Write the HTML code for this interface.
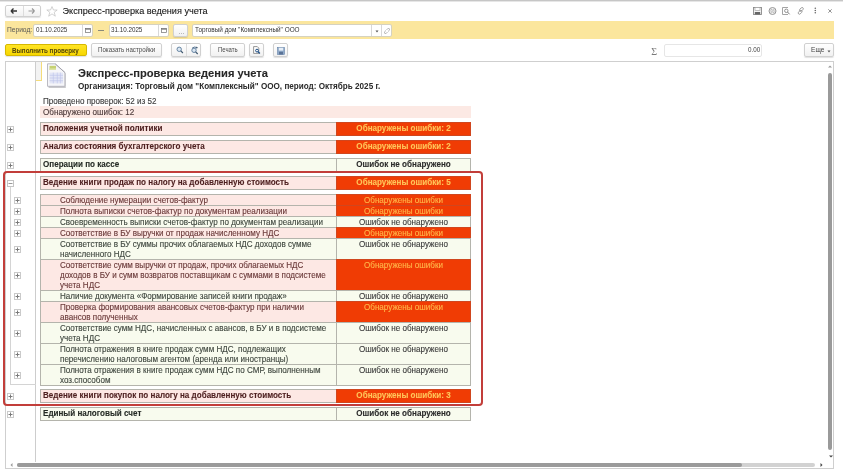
<!DOCTYPE html>
<html><head><meta charset="utf-8">
<style>
*{margin:0;padding:0;box-sizing:border-box}
html,body{width:843px;height:475px;overflow:hidden;background:#fff;-webkit-font-smoothing:antialiased;font-family:"Liberation Sans",sans-serif;position:relative}
.a{position:absolute}
.t{position:absolute;white-space:nowrap;line-height:1}
.btn{position:absolute;border:1px solid #d0d0d0;border-radius:2px;background:linear-gradient(#ffffff,#f1f1f1);box-shadow:0 1px 1px rgba(0,0,0,.12)}
.fld{position:absolute;background:#fff;border:1px solid #d6d2bf;border-radius:2px}
.vd{position:absolute;top:0;bottom:0;width:1px;background:#d8d8d8}
.pb{position:absolute;width:7px;height:7px}
.row{position:absolute;left:40px;width:431px}
.lc{position:absolute;left:0;top:0;bottom:0;width:297px;border:1px solid #b4b4ac}
.rc{position:absolute;left:296px;top:0;bottom:0;width:135px;border:1px solid #b4b4ac}
.pk{background:#fde8e4}
.gr{background:#f8fbee}
.rd{background:#f03c04;border-color:#d0461e}
.bt{font-weight:bold;font-size:8.1px}
.c{transform-origin:0 0;transform:scaleX(.783)}
.mr{position:absolute;left:40px;width:431px;height:14px}
.sr{position:absolute;left:40px;width:431px}
.mt{position:absolute;left:2px;top:0.9px;font-size:8.7px;font-weight:bold;white-space:nowrap;line-height:1;transform:scaleX(.93);transform-origin:0 0}
.ms{position:absolute;left:0;right:0;top:0.9px;text-align:center;font-size:8.7px;font-weight:bold;white-space:nowrap;line-height:1;transform:scaleX(.93)}
.ss{position:absolute;left:0;right:0;top:-0.1px;text-align:center;font-size:8.4px;white-space:nowrap;line-height:10px;transform:scaleX(.965)}
.stx{position:absolute;left:19px;top:-0.1px;font-size:8.4px;white-space:nowrap;line-height:10px;transform:scaleX(.965);transform-origin:0 0}
.stx,.ss,.tr{-webkit-text-stroke:0.12px currentColor}
.mt,.ms{-webkit-text-stroke:0.1px currentColor}
.tp{color:#4c1e1e}.tg{color:#242a24}.ty{color:#ffc65a}.tk{color:#2a2a2a}
.sp{color:#693838}.sg{color:#3c443c}.sy{color:#ffb74a}.sk{color:#3a3a3a}
</style></head><body><div style="position:absolute;left:0;top:0;width:843px;height:475px;will-change:transform">

<!-- top line -->
<div class="a" style="left:0;top:0;width:843px;height:1px;background:#c6c6c6"></div><div class="a" style="left:0;top:1px;width:843px;height:1px;background:#e6e6e6"></div>

<!-- nav buttons -->
<div class="btn" style="left:5px;top:5px;width:35.5px;height:12px"></div>
<div class="a" style="left:22.5px;top:6px;width:1px;height:10px;background:#dcdcdc"></div>
<svg class="a" style="left:10px;top:7px" width="8" height="8" viewBox="0 0 8 8"><path d="M1 4H7M1 4L3.5 1.5M1 4L3.5 6.5" stroke="#333" stroke-width="1.4" fill="none"/></svg>
<svg class="a" style="left:28px;top:7px" width="8" height="8" viewBox="0 0 8 8"><path d="M0.5 4H6.5M6.5 4L4 1.5M6.5 4L4 6.5" stroke="#9a9a9a" stroke-width="1.2" fill="none"/></svg>
<!-- star -->
<svg class="a" style="left:45.5px;top:5.5px" width="12" height="11" viewBox="0 0 12 11"><path d="M6 0.6L7.5 4H11.2L8.2 6.3L9.3 10.2L6 7.9L2.7 10.2L3.8 6.3L0.8 4H4.5Z" stroke="#c6c6c6" stroke-width="0.8" fill="none"/></svg>
<div class="t" style="left:62.5px;top:7px;font-size:9.15px;color:#151515;-webkit-text-stroke:0.1px #151515">Экспресс-проверка ведения учета</div>

<!-- top right icons -->
<svg class="a" style="left:752.5px;top:6.5px" width="9" height="8" viewBox="0 0 9 8"><rect x="0.5" y="0.5" width="8" height="7" fill="#f4f4f4" stroke="#8c8c8c" stroke-width="0.9"/><rect x="2" y="0.5" width="5" height="3" fill="#fff" stroke="#9a9a9a" stroke-width="0.6"/><rect x="1.8" y="5" width="5.4" height="2.5" fill="#666"/></svg>
<svg class="a" style="left:767.5px;top:6.5px" width="9" height="8" viewBox="0 0 9 8"><circle cx="4.5" cy="4" r="3.5" fill="#f2f2f2" stroke="#8c8c8c" stroke-width="0.9"/><path d="M2.3 3.2Q3.3 2.2 4.3 3.2M4.7 4.8Q5.7 5.8 6.7 4.8M2.5 5H4.5M4.5 3H6.5" fill="none" stroke="#8a8a8a" stroke-width="0.7"/></svg>
<svg class="a" style="left:782px;top:6.5px" width="9" height="8" viewBox="0 0 9 8"><path d="M6 0.5H0.5V7.5H6" fill="none" stroke="#9a9a9a" stroke-width="0.9"/><circle cx="4.3" cy="3.8" r="1.7" fill="none" stroke="#7a7a7a" stroke-width="0.8"/><path d="M5.5 5L7.6 7.3" stroke="#7a7a7a" stroke-width="1"/></svg>
<svg class="a" style="left:797px;top:6.5px" width="8" height="8" viewBox="0 0 8 8"><rect x="3.2" y="0.2" width="2.4" height="4.4" rx="1.2" transform="rotate(45 4.4 2.4)" fill="none" stroke="#8a8a8a" stroke-width="0.8"/><rect x="1.9" y="3.1" width="2.4" height="4.4" rx="1.2" transform="rotate(45 3.1 5.3)" fill="none" stroke="#8a8a8a" stroke-width="0.8"/></svg>
<svg class="a" style="left:813px;top:7px" width="5" height="7" viewBox="0 0 5 7"><circle cx="2.3" cy="1.2" r="0.8" fill="#666"/><circle cx="2.3" cy="3.5" r="0.8" fill="#666"/><circle cx="2.3" cy="5.8" r="0.8" fill="#666"/></svg>
<svg class="a" style="left:828.3px;top:8.8px" width="4" height="4" viewBox="0 0 4 4"><path d="M0.3 0.3L3.7 3.7M3.7 0.3L0.3 3.7" stroke="#777" stroke-width="0.8"/></svg>

<!-- yellow band -->
<div class="a" style="left:5px;top:21px;width:829px;height:18px;background:#fbe69d"></div>
<div class="t c" style="left:7.4px;top:26.2px;font-size:8px;color:#555;transform:scaleX(.83)">Период:</div>
<div class="fld" style="left:33px;top:24px;width:60px;height:13px"><div class="vd" style="left:48px"></div></div>
<div class="t c" style="left:35.7px;top:26.2px;font-size:8px;color:#333">01.10.2025</div>
<svg class="a" style="left:85px;top:28px" width="6" height="5" viewBox="0 0 6 5"><rect x="0.6" y="0.6" width="4.8" height="3.8" fill="none" stroke="#707070" stroke-width="0.7"/><rect x="0.6" y="0.6" width="4.8" height="1" fill="#707070"/></svg>
<div class="a" style="left:97.8px;top:30px;width:6.5px;height:1px;background:#8a8a7a"></div>
<div class="fld" style="left:109px;top:24px;width:60px;height:13px"><div class="vd" style="left:48px"></div></div>
<div class="t c" style="left:110.9px;top:26.2px;font-size:8px;color:#333">31.10.2025</div>
<svg class="a" style="left:161px;top:28px" width="6" height="5" viewBox="0 0 6 5"><rect x="0.6" y="0.6" width="4.8" height="3.8" fill="none" stroke="#707070" stroke-width="0.7"/><rect x="0.6" y="0.6" width="4.8" height="1" fill="#707070"/></svg>
<div class="btn" style="left:173px;top:24px;width:15px;height:13px"></div>
<div class="a" style="left:178.5px;top:33px;width:1px;height:1px;background:#bbb"></div>
<div class="a" style="left:180.5px;top:33px;width:1px;height:1px;background:#bbb"></div>
<div class="a" style="left:182.5px;top:33px;width:1px;height:1px;background:#bbb"></div>
<div class="fld" style="left:192px;top:24px;width:200px;height:13px"><div class="vd" style="left:178px"></div><div class="vd" style="left:188px"></div></div>
<div class="t c" style="left:194.9px;top:26.2px;font-size:8px;color:#333;transform:scaleX(.8)">Торговый дом "Комплексный" ООО</div>
<svg class="a" style="left:374.5px;top:29.5px" width="4" height="3" viewBox="0 0 4 3"><path d="M0.5 0.5H3.5L2 2.5Z" fill="#555"/></svg>
<svg class="a" style="left:383.5px;top:27.5px" width="6" height="6" viewBox="0 0 6 6"><path d="M2.6 1.8L3.7 0.7A0.9 0.9 0 0 1 5.3 2.3L4.2 3.4M3.4 4.2L2.3 5.3A0.9 0.9 0 0 1 0.7 3.7L1.8 2.6" fill="none" stroke="#888" stroke-width="0.7"/></svg>

<!-- button row -->
<div class="a" style="left:5px;top:43.5px;width:82px;height:12.8px;border:1px solid #d6b800;border-radius:2px;background:linear-gradient(#ffe424,#f7d700);box-shadow:0 1px 1px rgba(0,0,0,.12)"></div>
<div class="t c" style="left:11.9px;top:46.7px;font-size:8px;font-weight:bold;color:#54460a">Выполнить проверку</div>
<div class="btn" style="left:91px;top:43px;width:71px;height:13.5px"></div>
<div class="t c" style="left:97.8px;top:46px;font-size:8px;color:#4c4c4c;transform:scaleX(.772)">Показать настройки</div>
<div class="btn" style="left:171px;top:43px;width:30px;height:13.5px"></div>
<div class="a" style="left:186px;top:44px;width:1px;height:11.5px;background:#dcdcdc"></div>
<svg class="a" style="left:175.5px;top:46px" width="8" height="8" viewBox="0 0 8 8"><circle cx="3.2" cy="3.3" r="2.2" fill="#dbe7f2" stroke="#5a7b9b" stroke-width="0.9"/><path d="M4.8 4.9L6.9 7" stroke="#3f5870" stroke-width="1.2"/></svg>
<svg class="a" style="left:190.5px;top:45.5px" width="8" height="9" viewBox="0 0 8 9"><circle cx="3" cy="4.3" r="2.2" fill="#dbe7f2" stroke="#5a7b9b" stroke-width="0.9"/><path d="M4.6 5.9L6.7 8" stroke="#3f5870" stroke-width="1.2"/><path d="M1.2 2Q3.5 0.3 6 1.6" fill="none" stroke="#4a6a8a" stroke-width="0.9"/><path d="M5.2 0.6L7 1.8L5.4 2.8Z" fill="#3f5870"/></svg>
<div class="btn" style="left:210px;top:43px;width:34.5px;height:13.5px"></div>
<div class="t c" style="left:217.6px;top:46px;font-size:8px;color:#4c4c4c;transform:scaleX(.75)">Печать</div>
<div class="btn" style="left:249px;top:43px;width:15px;height:13.5px"></div>
<svg class="a" style="left:253px;top:46px" width="8" height="8" viewBox="0 0 8 8"><path d="M0.6 0.6H4.3L5.8 2.1V7.4H0.6Z" fill="#fff" stroke="#6a6a6a" stroke-width="0.7"/><circle cx="4" cy="4.6" r="1.4" fill="none" stroke="#1f4f86" stroke-width="1"/><path d="M5 5.6L6.9 7.5" stroke="#1f4f86" stroke-width="1.2"/></svg>
<div class="btn" style="left:273px;top:43px;width:15px;height:13.5px"></div>
<svg class="a" style="left:276.5px;top:46.5px" width="8" height="8" viewBox="0 0 8 8"><rect x="0.5" y="0.5" width="7" height="7" fill="#8fa9c9" stroke="#6684a8" stroke-width="0.6"/><rect x="1.8" y="0.8" width="4.4" height="2.8" fill="#e6eef7"/><rect x="2" y="4.8" width="4" height="2.7" fill="#5a7396"/></svg>

<div class="t" style="left:651.3px;top:47px;font-size:10px;color:#7a7a7a;font-family:'Liberation Serif',serif">Σ</div>
<div class="fld" style="left:664px;top:43.5px;width:98px;height:13px;border-color:#e6e6e6"></div>
<div class="t c" style="left:748px;top:46px;font-size:8px;color:#444">0.00</div>
<div class="btn" style="left:804px;top:43px;width:30px;height:13.5px"></div>
<div class="t c" style="left:810.9px;top:46px;font-size:8px;color:#444;transform:scaleX(.82)">Еще</div>
<svg class="a" style="left:826.5px;top:49.5px" width="4" height="3" viewBox="0 0 4 3"><path d="M0.5 0.5H3.5L2 2.5Z" fill="#555"/></svg>

<!-- spreadsheet frame -->
<div class="a" style="left:5px;top:61px;width:829px;height:408px;border:1px solid #cfcfcf"></div>
<div class="a" style="left:35px;top:62px;width:1px;height:400px;background:#cdcdcd"></div>
<div class="a" style="left:36px;top:62px;width:5.5px;height:19px;border-right:1px solid #f5dc7a;border-bottom:1px solid #f5dc7a;background:#f3f3f3"></div>

<!-- doc icon -->
<svg class="a" style="left:47px;top:63px" width="20" height="26" viewBox="0 0 20 26">
<path d="M1.6 2.3H9.6L18.8 10.6V25H1.6Z" fill="#c9c9cc"/>
<path d="M0.5 0.8H8.2L17.9 9.5V23.3H0.5Z" fill="#f6f6f9" stroke="#b3b3bb" stroke-width="0.9"/>
<path d="M8.2 0.8L17.9 9.5" stroke="#9c9ca6" stroke-width="0.8"/>
<rect x="2.5" y="2.8" width="6.5" height="4.2" fill="#c6d172"/>
<rect x="2.5" y="5.4" width="6.5" height="1.6" fill="#dde3a6"/>
<rect x="2.5" y="9.6" width="13.6" height="10.8" fill="#e3e6f6"/>
<path d="M2.5 12.3H16.1M2.5 15H16.1M2.5 17.7H16.1M6.3 9.6V20.4M10.3 9.6V20.4M13.4 9.6V20.4" stroke="#bcc3ea" stroke-width="0.6"/>
</svg>

<div class="t" style="left:78px;top:67.6px;font-size:11.15px;font-weight:bold;color:#282828;-webkit-text-stroke:0.1px #282828">Экспресс-проверка ведения учета</div>
<div class="t" style="left:78px;top:82.5px;font-size:8.15px;font-weight:bold;color:#2a2a2a">Организация: Торговый дом "Комплексный" ООО, период: Октябрь 2025 г.</div>
<div class="t tr" style="left:43px;top:97px;font-size:8.4px;color:#3c3c3c;transform:scaleX(.965);transform-origin:0 0">Проведено проверок: 52 из 52</div>
<div class="a" style="left:40px;top:106px;width:431px;height:12px;background:#fce9e4"></div>
<div class="t tr" style="left:43px;top:108.3px;font-size:8.4px;color:#4a3838;transform:scaleX(.965);transform-origin:0 0">Обнаружено ошибок: 12</div>

<!-- plus boxes main -->
<svg class="pb" style="left:6.5px;top:125.5px" viewBox="0 0 7 7"><rect x="0.5" y="0.5" width="6" height="6" fill="#fff" stroke="#cacaca"/><path d="M1.5 3.5H5.5M3.5 1.5V5.5" stroke="#7a7a7a" stroke-width="1"/></svg>
<svg class="pb" style="left:6.5px;top:143.5px" viewBox="0 0 7 7"><rect x="0.5" y="0.5" width="6" height="6" fill="#fff" stroke="#cacaca"/><path d="M1.5 3.5H5.5M3.5 1.5V5.5" stroke="#7a7a7a" stroke-width="1"/></svg>
<svg class="pb" style="left:6.5px;top:161.5px" viewBox="0 0 7 7"><rect x="0.5" y="0.5" width="6" height="6" fill="#fff" stroke="#cacaca"/><path d="M1.5 3.5H5.5M3.5 1.5V5.5" stroke="#7a7a7a" stroke-width="1"/></svg>
<svg class="pb" style="left:6.8px;top:179.8px" viewBox="0 0 7 7"><rect x="0.5" y="0.5" width="6" height="6" fill="#fff" stroke="#c4c4c4"/><path d="M1.5 3.5H5.5" stroke="#999" stroke-width="1"/></svg>
<div class="a" style="left:9.5px;top:186.5px;width:1px;height:198px;background:#d4d4d4"></div><div class="a" style="left:9.5px;top:384px;width:26px;height:1px;background:#d4d4d4"></div>
<svg class="pb" style="left:6.5px;top:392.5px" viewBox="0 0 7 7"><rect x="0.5" y="0.5" width="6" height="6" fill="#fff" stroke="#cacaca"/><path d="M1.5 3.5H5.5M3.5 1.5V5.5" stroke="#7a7a7a" stroke-width="1"/></svg>
<svg class="pb" style="left:6.5px;top:410.5px" viewBox="0 0 7 7"><rect x="0.5" y="0.5" width="6" height="6" fill="#fff" stroke="#cacaca"/><path d="M1.5 3.5H5.5M3.5 1.5V5.5" stroke="#7a7a7a" stroke-width="1"/></svg>
<div id="rows"><div class="mr" style="top:122px"><div class="lc pk"><span class="mt tp">Положения учетной политики</span></div><div class="rc rd"><span class="ms ty">Обнаружены ошибки: 2</span></div></div>
<div class="mr" style="top:140px"><div class="lc pk"><span class="mt tp">Анализ состояния бухгалтерского учета</span></div><div class="rc rd"><span class="ms ty">Обнаружены ошибки: 2</span></div></div>
<div class="mr" style="top:158px"><div class="lc gr"><span class="mt tg">Операции по кассе</span></div><div class="rc gr"><span class="ms tk">Ошибок не обнаружено</span></div></div>
<div class="mr" style="top:176px"><div class="lc pk"><span class="mt tp">Ведение книги продаж по налогу на добавленную стоимость</span></div><div class="rc rd"><span class="ms ty">Обнаружены ошибки: 5</span></div></div>
<div class="mr" style="top:389px"><div class="lc pk"><span class="mt tp">Ведение книги покупок по налогу на добавленную стоимость</span></div><div class="rc rd"><span class="ms ty">Обнаружены ошибки: 3</span></div></div>
<div class="mr" style="top:407px"><div class="lc gr"><span class="mt tg">Единый налоговый счет</span></div><div class="rc gr"><span class="ms tk">Ошибок не обнаружено</span></div></div>
<div class="sr" style="top:194px;height:12px"><div class="lc pk"><span class="stx sp">Соблюдение нумерации счетов-фактур</span></div><div class="rc rd"><span class="ss sy">Обнаружены ошибки</span></div></div>
<svg class="pb" style="left:14px;top:197.0px" viewBox="0 0 7 7"><rect x="0.5" y="0.5" width="6" height="6" fill="#fff" stroke="#cacaca"/><path d="M1.5 3.5H5.5M3.5 1.5V5.5" stroke="#7a7a7a" stroke-width="1"/></svg>
<div class="sr" style="top:205px;height:12px"><div class="lc pk"><span class="stx sp">Полнота выписки счетов-фактур по документам реализации</span></div><div class="rc rd"><span class="ss sy">Обнаружены ошибки</span></div></div>
<svg class="pb" style="left:14px;top:208.0px" viewBox="0 0 7 7"><rect x="0.5" y="0.5" width="6" height="6" fill="#fff" stroke="#cacaca"/><path d="M1.5 3.5H5.5M3.5 1.5V5.5" stroke="#7a7a7a" stroke-width="1"/></svg>
<div class="sr" style="top:216px;height:12px"><div class="lc gr"><span class="stx sg">Своевременность выписки счетов-фактур по документам реализации</span></div><div class="rc gr"><span class="ss sk">Ошибок не обнаружено</span></div></div>
<svg class="pb" style="left:14px;top:219.0px" viewBox="0 0 7 7"><rect x="0.5" y="0.5" width="6" height="6" fill="#fff" stroke="#cacaca"/><path d="M1.5 3.5H5.5M3.5 1.5V5.5" stroke="#7a7a7a" stroke-width="1"/></svg>
<div class="sr" style="top:227px;height:12px"><div class="lc pk"><span class="stx sp">Соответствие в БУ выручки от продаж начисленному НДС</span></div><div class="rc rd"><span class="ss sy">Обнаружены ошибки</span></div></div>
<svg class="pb" style="left:14px;top:230.0px" viewBox="0 0 7 7"><rect x="0.5" y="0.5" width="6" height="6" fill="#fff" stroke="#cacaca"/><path d="M1.5 3.5H5.5M3.5 1.5V5.5" stroke="#7a7a7a" stroke-width="1"/></svg>
<div class="sr" style="top:238px;height:22px"><div class="lc gr"><span class="stx sg">Соответствие в БУ суммы прочих облагаемых НДС доходов сумме<br>начисленного НДС</span></div><div class="rc gr"><span class="ss sk">Ошибок не обнаружено</span></div></div>
<svg class="pb" style="left:14px;top:246.0px" viewBox="0 0 7 7"><rect x="0.5" y="0.5" width="6" height="6" fill="#fff" stroke="#cacaca"/><path d="M1.5 3.5H5.5M3.5 1.5V5.5" stroke="#7a7a7a" stroke-width="1"/></svg>
<div class="sr" style="top:259px;height:32px"><div class="lc pk"><span class="stx sp">Соответствие сумм выручки от продаж, прочих облагаемых НДС<br>доходов в БУ и сумм возвратов поставщикам с суммами в подсистеме<br>учета НДС</span></div><div class="rc rd"><span class="ss sy">Обнаружены ошибки</span></div></div>
<svg class="pb" style="left:14px;top:272.0px" viewBox="0 0 7 7"><rect x="0.5" y="0.5" width="6" height="6" fill="#fff" stroke="#cacaca"/><path d="M1.5 3.5H5.5M3.5 1.5V5.5" stroke="#7a7a7a" stroke-width="1"/></svg>
<div class="sr" style="top:290px;height:12px"><div class="lc gr"><span class="stx sg">Наличие документа «Формирование записей книги продаж»</span></div><div class="rc gr"><span class="ss sk">Ошибок не обнаружено</span></div></div>
<svg class="pb" style="left:14px;top:293.0px" viewBox="0 0 7 7"><rect x="0.5" y="0.5" width="6" height="6" fill="#fff" stroke="#cacaca"/><path d="M1.5 3.5H5.5M3.5 1.5V5.5" stroke="#7a7a7a" stroke-width="1"/></svg>
<div class="sr" style="top:301px;height:22px"><div class="lc pk"><span class="stx sp">Проверка формирования авансовых счетов-фактур при наличии<br>авансов полученных</span></div><div class="rc rd"><span class="ss sy">Обнаружены ошибки</span></div></div>
<svg class="pb" style="left:14px;top:309.0px" viewBox="0 0 7 7"><rect x="0.5" y="0.5" width="6" height="6" fill="#fff" stroke="#cacaca"/><path d="M1.5 3.5H5.5M3.5 1.5V5.5" stroke="#7a7a7a" stroke-width="1"/></svg>
<div class="sr" style="top:322px;height:22px"><div class="lc gr"><span class="stx sg">Соответствие сумм НДС, начисленных с авансов, в БУ и в подсистеме<br>учета НДС</span></div><div class="rc gr"><span class="ss sk">Ошибок не обнаружено</span></div></div>
<svg class="pb" style="left:14px;top:330.0px" viewBox="0 0 7 7"><rect x="0.5" y="0.5" width="6" height="6" fill="#fff" stroke="#cacaca"/><path d="M1.5 3.5H5.5M3.5 1.5V5.5" stroke="#7a7a7a" stroke-width="1"/></svg>
<div class="sr" style="top:343px;height:22px"><div class="lc gr"><span class="stx sg">Полнота отражения в книге продаж сумм НДС, подлежащих<br>перечислению налоговым агентом (аренда или иностранцы)</span></div><div class="rc gr"><span class="ss sk">Ошибок не обнаружено</span></div></div>
<svg class="pb" style="left:14px;top:351.0px" viewBox="0 0 7 7"><rect x="0.5" y="0.5" width="6" height="6" fill="#fff" stroke="#cacaca"/><path d="M1.5 3.5H5.5M3.5 1.5V5.5" stroke="#7a7a7a" stroke-width="1"/></svg>
<div class="sr" style="top:364px;height:22px"><div class="lc gr"><span class="stx sg">Полнота отражения в книге продаж сумм НДС по СМР, выполненным<br>хоз.способом</span></div><div class="rc gr"><span class="ss sk">Ошибок не обнаружено</span></div></div>
<svg class="pb" style="left:14px;top:372.0px" viewBox="0 0 7 7"><rect x="0.5" y="0.5" width="6" height="6" fill="#fff" stroke="#cacaca"/><path d="M1.5 3.5H5.5M3.5 1.5V5.5" stroke="#7a7a7a" stroke-width="1"/></svg></div><!--/rows-->

<!-- red outline -->
<div class="a" style="left:3px;top:170.5px;width:480px;height:235.5px;border:2.6px solid #c23e3a;border-radius:4px"></div>

<!-- scrollbars -->
<div class="a" style="left:828px;top:73px;width:4px;height:377px;border-radius:2px;background:#9a9a9a"></div>
<svg class="a" style="left:828px;top:65px" width="4" height="3" viewBox="0 0 4 3"><path d="M0 2.5H4L2 0.5Z" fill="#999"/></svg>
<svg class="a" style="left:828.5px;top:455px" width="4" height="3" viewBox="0 0 4 3"><path d="M0 0.5H4L2 2.5Z" fill="#444"/></svg>
<div class="a" style="left:17px;top:463.2px;width:798px;height:3.7px;border-radius:2px;background:#d2d2d2"></div>
<div class="a" style="left:17px;top:463.2px;width:725px;height:3.7px;border-radius:2px;background:#9a9a9a"></div>
<svg class="a" style="left:9.5px;top:463px" width="3" height="4" viewBox="0 0 3 4"><path d="M2.5 0V4L0.5 2Z" fill="#999"/></svg>
<svg class="a" style="left:820px;top:463px" width="3" height="4" viewBox="0 0 3 4"><path d="M0.5 0V4L2.5 2Z" fill="#444"/></svg>

</div></body></html>
